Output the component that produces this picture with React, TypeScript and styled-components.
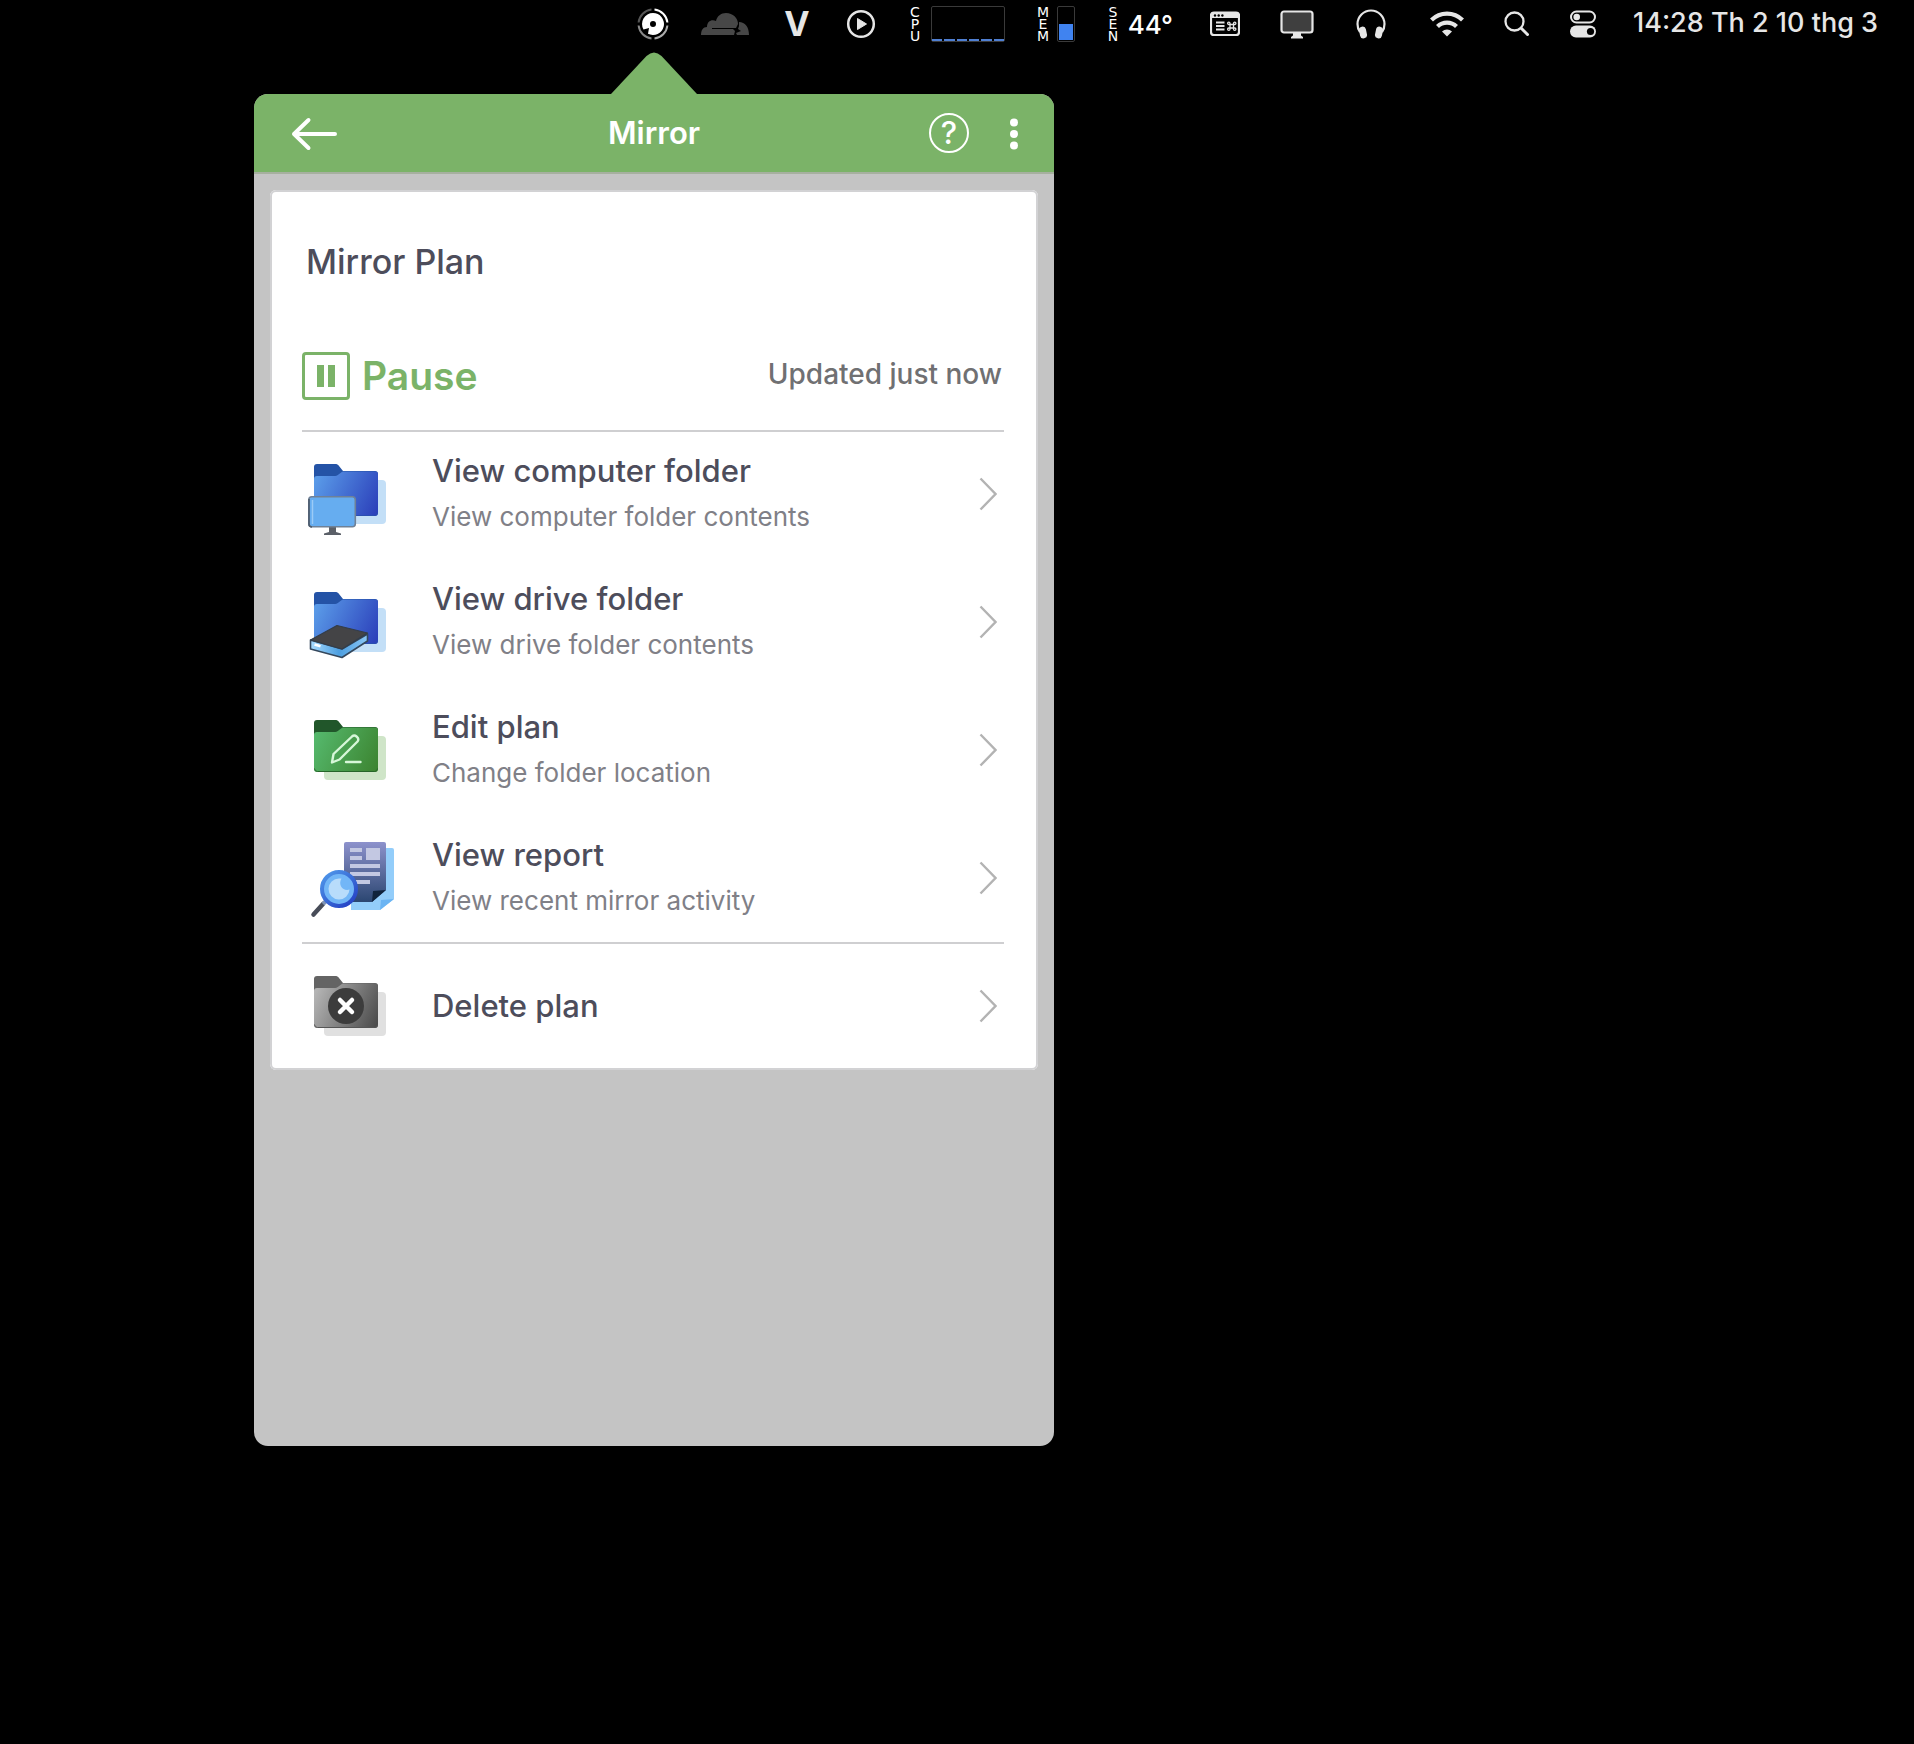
import React from "react";
import styled, { createGlobalStyle, css } from "styled-components";

const green = "#7bb368";
const ink = "#4d4d5b";
const chrome = "#e6e6e6";

const GlobalStyle = createGlobalStyle`
  *, *::before, *::after { box-sizing: border-box; }
  body {
    margin: 0;
    min-height: 100vh;
    background: #000;
    font-family: Inter, Roboto, "Liberation Sans", sans-serif;
  }
  button { font: inherit; color: inherit; background: none; border: 0; padding: 0; cursor: pointer; }
  h1, h2, p, ul { margin: 0; padding: 0; }
  ul { list-style: none; }
  svg { display: block; }
`;

/* ---------- menu bar ---------- */

const MenuBar = styled.nav`
  display: flex;
  align-items: center;
  justify-content: flex-end;
  gap: 32px;
  height: 48px;
  padding: 0 36px;
  color: ${chrome};
`;

const MenuItem = styled.button<{ $width?: number }>`
  display: flex;
  align-items: center;
  justify-content: center;
  flex: none;
  height: 48px;
  ${(p) => p.$width && css`width: ${p.$width}px;`}
`;

const Letter = styled.span`
  font-size: 34px;
  font-weight: 700;
  line-height: 48px;
`;

const Monitor = styled(MenuItem)`
  justify-content: space-between;
  color: #fff;
`;

const StackedLabel = styled.span`
  display: flex;
  flex-direction: column;
  align-items: center;
  width: 12px;
  font-family: "DejaVu Sans", sans-serif;
  font-size: 14px;
  line-height: 12px;
`;

const CpuGraph = styled.span`
  display: flex;
  align-items: flex-end;
  gap: 2px;
  width: 74px;
  height: 36px;
  border: 1px solid #3a3a3a;
  border-radius: 2px;
`;

const CpuBar = styled.span`
  flex: 1;
  height: 2px;
  background: #4f7fd2;
`;

const MemGauge = styled.span`
  display: flex;
  align-items: flex-end;
  width: 18px;
  height: 36px;
  padding: 1px;
  border: 1px solid #3a3a3a;
  border-radius: 2px;
`;

const MemFill = styled.span`
  flex: 1;
  height: 50%;
  background: #4083f0;
`;

const Temperature = styled.span`
  font-size: 26px;
  font-weight: 500;
`;

const Clock = styled.time`
  font-size: 27px;
  font-weight: 500;
  line-height: 46px;
  height: 48px;
  white-space: nowrap;
`;

/* ---------- popover ---------- */

const Panel = styled.main`
  position: relative;
  width: 800px;
  max-width: calc(100% - 254px);
  min-height: 1352px;
  margin: 46px 0 0 254px;
  border-radius: 14px;
  background: #c4c4c4;
`;

const Caret = styled.svg`
  position: absolute;
  bottom: 100%;
  left: 50%;
  margin-left: -43px;
`;

const PanelHeader = styled.header`
  display: grid;
  grid-template-columns: 1fr auto 1fr;
  align-items: center;
  height: 80px;
  padding: 0 26px;
  border-bottom: 2px solid #a6b09f;
  border-radius: 14px 14px 0 0;
  background: ${green};
  color: #fff;
`;

const PanelTitle = styled.h1`
  font-size: 31px;
  font-weight: 600;
  line-height: 40px;
`;

const BackButton = styled.button`
  justify-self: start;
`;

const HeaderActions = styled.div`
  display: flex;
  align-items: center;
  justify-content: flex-end;
  gap: 31px;
`;

const HelpButton = styled.button`
  width: 40px;
  height: 40px;
  border: 2px solid #fff;
  border-radius: 50%;
  font-size: 31px;
  font-weight: 500;
  line-height: 36px;
`;

const Card = styled.section`
  margin: 16px;
  padding: 50px 34px 0 32px;
  border-radius: 6px;
  background: #fff;
  box-shadow: inset 0 0 0 2px #d2d2d4;
`;

const PlanTitle = styled.h2`
  padding-left: 4px;
  color: ${ink};
  font-size: 34px;
  font-weight: 500;
  line-height: 44px;
`;

const StatusRow = styled.div`
  display: flex;
  align-items: center;
  justify-content: space-between;
  padding: 68px 2px 30px 0;
`;

const PauseButton = styled.button`
  display: flex;
  align-items: center;
  gap: 12px;
  height: 48px;
  color: ${green};
  font-size: 39px;
  font-weight: 600;
  line-height: 48px;
`;

const StatusText = styled.p`
  padding-bottom: 4px;
  color: #707072;
  font-size: 28px;
  font-weight: 500;
  line-height: 44px;
`;

const ActionItem = styled.li<{ $divided?: boolean }>`
  ${(p) => p.$divided && css`box-shadow: inset 0 2px 0 #cfcfd1;`}
`;

const ActionButton = styled.button`
  display: flex;
  align-items: center;
  width: 100%;
  height: 128px;
  padding-right: 7px;
  text-align: left;
`;

const ActionText = styled.span`
  display: flex;
  flex: 1;
  flex-direction: column;
  padding-left: 34px;
`;

const ActionTitle = styled.span`
  color: ${ink};
  font-size: 31px;
  font-weight: 500;
  line-height: 46px;
`;

const ActionHint = styled.span`
  color: #808087;
  font-size: 26px;
  line-height: 46px;
`;

/* ---------- drawings ---------- */

const DiskIcon = () => (
  <svg width="32" height="32" viewBox="0 0 32 32" fill="none" aria-hidden="true">
    <path d="M17.5 1.6A14.5 14.5 0 0 1 30.4 14.5" stroke="#fff" strokeWidth="2" />
    <path d="M30.4 17.5A14.5 14.5 0 0 1 17.5 30.4" stroke="#aaa" strokeWidth="2" />
    <path d="M14.5 30.4A14.5 14.5 0 0 1 1.6 17.5" stroke="#888" strokeWidth="2" />
    <path d="M1.6 14.5A14.5 14.5 0 0 1 14.5 1.6" stroke="#555" strokeWidth="2" />
    <path
      d="M16 5a11 11 0 1 1-5 20.8L12 20 6.5 21.5A11 11 0 0 1 16 5zM16 13a3 3 0 1 0 0 6 3 3 0 0 0 0-6z"
      fill="#fff"
      fillRule="evenodd"
    />
  </svg>
);

const CloudIcon = () => (
  <svg width="48" height="24" viewBox="0 0 48 24" fill="#474747" aria-hidden="true">
    <path d="M0 23c0-5 2-8 6-8 0-5 4-8 9-6 1-5 5-8 10-8 7 0 12 5 12 11l-2 4H11v1h21l2 2-1 4z" />
    <path d="M38 10c6 0 10 5 10 13H36l-1-2 5-2-3-2 1-3z" />
  </svg>
);

const PlayIcon = () => (
  <svg width="32" height="32" viewBox="0 0 32 32" aria-hidden="true">
    <circle cx="16" cy="16" r="12.8" fill="none" stroke={chrome} strokeWidth="2.5" />
    <path d="M12.5 10.5v11l9-5.500z" fill={chrome} stroke={chrome} strokeLinejoin="round" />
  </svg>
);

const ShortcutsIcon = () => (
  <svg width="30" height="26" viewBox="0 0 30 26" fill="none" stroke={chrome} aria-hidden="true">
    <rect x="1" y="1.5" width="28" height="22.5" rx="3" strokeWidth="2.2" />
    <path d="M1 4a3 3 0 0 1 3-3h22a3 3 0 0 1 3 3v3H1z" fill={chrome} stroke="none" />
    <g fill="#000" stroke="none">
      <circle cx="5" cy="4.5" r="1.2" />
      <circle cx="8.7" cy="4.5" r="1.2" />
      <circle cx="12.4" cy="4.5" r="1.2" />
    </g>
    <path d="M6 11.5h8.5M6 15h8.5M6 18.5h8.5" strokeWidth="1.8" />
    <path
      d="M20 13.500h3.500v3.500H20zM20 13.500h-1.300a1.200 1.200 0 1 1 1.300-1.300zM23.500 13.500v-1.300a1.200 1.200 0 1 1 1.300 1.300zM23.500 17h1.300a1.200 1.200 0 1 1-1.300 1.300zM20 17v1.300a1.200 1.200 0 1 1-1.300-1.300z"
      strokeWidth="1.3"
    />
  </svg>
);

const DisplayIcon = () => (
  <svg width="34" height="30" viewBox="0 0 34 30" aria-hidden="true">
    <rect x="1.5" y="2.5" width="31" height="21" rx="2.5" fill="#3f3f3f" stroke={chrome} strokeWidth="2.2" />
    <path d="M13 24h8v2.500l2 1.500v1.500H11V28l2-1.500z" fill={chrome} />
  </svg>
);

const HeadphonesIcon = () => (
  <svg width="30" height="30" viewBox="0 0 30 30" fill="none" aria-hidden="true">
    <path d="M4 23C2 20.500 1.500 18 1.500 15a13.500 13.500 0 0 1 27 0c0 3-.5 5.500-2.500 8" stroke={chrome} strokeWidth="2.2" />
    <rect x="3.5" y="17.5" width="7" height="12" rx="3.5" transform="rotate(-12 7 23.5)" fill={chrome} />
    <rect x="19.5" y="17.5" width="7" height="12" rx="3.5" transform="rotate(12 23 23.5)" fill={chrome} />
  </svg>
);

const WifiIcon = () => (
  <svg width="34" height="26" viewBox="0 0 34 26" fill="none" stroke={chrome} strokeWidth="4.2" aria-hidden="true">
    <path d="M1.500 9a22 22 0 0 1 31 0" />
    <path d="M7.500 15.500a13.500 13.500 0 0 1 19 0" />
    <path d="M17 25.500l-5-5a7.200 7.200 0 0 1 10 0z" fill={chrome} stroke="none" />
  </svg>
);

const SearchIcon = () => (
  <svg width="26" height="26" viewBox="0 0 26 26" fill="none" stroke={chrome} strokeLinecap="round" aria-hidden="true">
    <circle cx="10.5" cy="10.5" r="9" strokeWidth="2.3" />
    <path d="M17.5 17.5l6 6" strokeWidth="3" />
  </svg>
);

const ControlCenterIcon = () => (
  <svg width="26" height="28" viewBox="0 0 26 28" aria-hidden="true">
    <rect x="1" y="1.5" width="24" height="11" rx="5.5" fill="none" stroke={chrome} strokeWidth="2" />
    <circle cx="6.7" cy="7" r="3.3" fill={chrome} />
    <rect x="0" y="15.5" width="26" height="12" rx="6" fill={chrome} />
    <circle cx="20.5" cy="21.5" r="3.6" fill="#000" />
  </svg>
);

const BackIcon = () => (
  <svg width="60" height="40" viewBox="0 0 60 40" fill="none" stroke="#fff" strokeWidth="4" strokeLinecap="round" strokeLinejoin="round" aria-hidden="true">
    <path d="M55 21H14M28.500 7L14 21l14.500 14" />
  </svg>
);

const MoreIcon = () => (
  <svg width="28" height="40" viewBox="0 0 28 40" fill="#fff" aria-hidden="true">
    <circle cx="14" cy="9.5" r="4" />
    <circle cx="14" cy="21" r="4" />
    <circle cx="14" cy="32.5" r="4" />
  </svg>
);

const PauseIcon = () => (
  <svg width="48" height="48" viewBox="0 0 48 48" aria-hidden="true">
    <rect x="1.5" y="1.5" width="45" height="45" rx="2.5" fill="none" stroke={green} strokeWidth="3" />
    <path d="M15 13h7v22h-7zM26 13h7v22h-7z" fill={green} />
  </svg>
);

const ChevronIcon = () => (
  <svg width="18" height="34" viewBox="0 0 18 34" fill="none" stroke="#b3b3b3" strokeWidth="2.4" aria-hidden="true">
    <path d="M1.500 1.500L16.500 17L1.500 32.500" />
  </svg>
);

type FolderProps = {
  id: string;
  back: string;
  from: string;
  to: string;
  shade: string;
  rim: string;
  children?: React.ReactNode;
};

const FolderIcon = ({ id, back, from, to, shade, rim, children }: FolderProps) => (
  <svg width="96" height="88" viewBox="0 0 96 88" fill="none" aria-hidden="true">
    <defs>
      <linearGradient id={id} x1="12" y1="32" x2="76" y2="62" gradientUnits="userSpaceOnUse">
        <stop stopColor={from} />
        <stop offset="1" stopColor={to} />
      </linearGradient>
    </defs>
    <rect x="22" y="30" width="62" height="44" rx="4" fill={shade} />
    <path d="M12 17a3 3 0 0 1 3-3h18c2 0 3 .5 4 2l4 5h32a3 3 0 0 1 3 3v39H12z" fill={back} />
    <path d="M12 29a3 3 0 0 1 3-3h17c2 0 3-.4 4.500-1.500l3-2.200C40.500 21.500 41.500 21.500 43 21.500h30a3 3 0 0 1 3 3V63a3 3 0 0 1-3 3H15a3 3 0 0 1-3-3z" fill={`url(#${id})`} />
    <path d="M12.500 62.500a3 3 0 0 0 3 3h57a3 3 0 0 0 3-3" stroke={rim} strokeWidth="1" />
    {children}
  </svg>
);

const blueFolder = { back: "#2453a6", from: "#5a9be8", to: "#2b3fba", shade: "#c3dff7", rim: "#2a4fb0" };

const ComputerFolderIcon = () => (
  <FolderIcon id="folder-computer" {...blueFolder}>
    <path d="M27 77h7v5l5 1.500V85H22v-1.500l5-1.500z" fill="#5b6068" />
    <rect x="6.8" y="46.8" width="46.5" height="30" rx="3" fill="#66adf0" stroke="#6f8197" strokeWidth="1.6" />
    <path d="M7 49v25a3 3 0 0 0 3 3" stroke="#4c5a6b" strokeWidth="1.6" />
    <path d="M10.500 50v24" stroke="#9bcbf7" strokeWidth="1.5" />
  </FolderIcon>
);

const DriveFolderIcon = () => (
  <FolderIcon id="folder-drive" {...blueFolder}>
    <defs>
      <linearGradient id="drive-side" x1="8" y1="64" x2="66" y2="64" gradientUnits="userSpaceOnUse">
        <stop stopColor="#a9dcff" />
        <stop offset="0.5" stopColor="#4d9fe0" />
        <stop offset="1" stopColor="#8ac6f5" />
      </linearGradient>
    </defs>
    <path d="M8.500 62L40 71l25.500-15v7L40 79.500 8.500 71z" fill="url(#drive-side)" stroke="#34475c" strokeWidth="1.6" strokeLinejoin="round" />
    <path d="M8.500 62L35 47.500l30.500 7.500L40 71z" fill="#444446" stroke="#333d49" strokeWidth="1.2" strokeLinejoin="round" />
    <path d="M12.500 66.500l6 1.800" stroke="#fff" strokeWidth="2.5" />
  </FolderIcon>
);

const EditFolderIcon = () => (
  <FolderIcon id="folder-edit" back="#21562a" from="#55b86c" to="#3c8430" shade="#cfe5c8" rim="#27652a">
    <g stroke="#d7f7d9" strokeWidth="2.4" strokeLinejoin="round" strokeLinecap="round">
      <path d="M30 56.500l1.500-8.500L50 30.500c3-2.500 8 1.500 5.500 5L37.500 53.500z" />
      <path d="M44 56h14.500" />
    </g>
  </FolderIcon>
);

const DeleteFolderIcon = () => (
  <FolderIcon id="folder-delete" back="#646464" from="#b5b5b5" to="#4a4a4a" shade="#e0e0e0" rim="#555">
    <circle cx="44" cy="44" r="18" fill="#3c3c3c" />
    <path d="M38 38l12 12M50 38L38 50" stroke="#fff" strokeWidth="4.5" strokeLinecap="round" />
  </FolderIcon>
);

const ReportIcon = () => (
  <svg width="96" height="88" viewBox="0 0 96 88" fill="none" aria-hidden="true">
    <defs>
      <linearGradient id="report-page" x1="63" y1="8" x2="63" y2="68" gradientUnits="userSpaceOnUse">
        <stop stopColor="#8d92cc" />
        <stop offset="1" stopColor="#2b4671" />
      </linearGradient>
      <linearGradient id="report-lens" x1="24" y1="40" x2="50" y2="72" gradientUnits="userSpaceOnUse">
        <stop stopColor="#4d93e8" />
        <stop offset="1" stopColor="#2440c4" />
      </linearGradient>
    </defs>
    <path d="M49 14h41a2 2 0 0 1 2 2v49L78 76H49z" fill="#93cdfa" />
    <path d="M78 76l1-10 13-1z" fill="#6bb4f3" />
    <path d="M42 10a2 2 0 0 1 2-2h38a2 2 0 0 1 2 2v46L70 68H42z" fill="url(#report-page)" />
    <path d="M70 68l1-11 13-1z" fill="#10233c" />
    <path d="M48 14h12v4H48zM48 22h12v4H48zM64 14h14v12H64zM48 30h30v4H48zM48 38h30v4H48zM54 46h14v4H54z" fill="#c3c8e2" />
    <path d="M21 70L11.500 80.500" stroke="#484c58" strokeWidth="4.5" strokeLinecap="round" />
    <path d="M24 67l-3 3" stroke="#7f93b4" strokeWidth="4" />
    <circle cx="37" cy="55" r="17" fill="#72b6f7" stroke="url(#report-lens)" strokeWidth="4" />
    <path d="M37 44.500a10.500 10.500 0 1 0 10.500 11c-6 2-12-4-8-11z" fill="#b8dcfb" />
  </svg>
);

/* ---------- content ---------- */

const actions = [
  { title: "View computer folder", hint: "View computer folder contents", Icon: ComputerFolderIcon, divided: true },
  { title: "View drive folder", hint: "View drive folder contents", Icon: DriveFolderIcon },
  { title: "Edit plan", hint: "Change folder location", Icon: EditFolderIcon },
  { title: "View report", hint: "View recent mirror activity", Icon: ReportIcon },
  { title: "Delete plan", Icon: DeleteFolderIcon, divided: true },
];

const Stacked = ({ text }: { text: string }) => (
  <StackedLabel>
    {text.split("").map((letter, i) => (
      <span key={i}>{letter}</span>
    ))}
  </StackedLabel>
);

export default function App() {
  return (
    <>
      <GlobalStyle />
      <MenuBar aria-label="Menu bar">
        <MenuItem $width={32} aria-label="Mirror"><DiskIcon /></MenuItem>
        <MenuItem $width={48} aria-label="Cloud"><CloudIcon /></MenuItem>
        <MenuItem $width={32}><Letter>V</Letter></MenuItem>
        <MenuItem $width={32} aria-label="Play"><PlayIcon /></MenuItem>
        <Monitor $width={96}>
          <Stacked text="CPU" />
          <CpuGraph>
            {Array.from({ length: 6 }, (_, i) => <CpuBar key={i} />)}
          </CpuGraph>
        </Monitor>
        <Monitor $width={38}>
          <Stacked text="MEM" />
          <MemGauge><MemFill /></MemGauge>
        </Monitor>
        <Monitor $width={66}>
          <Stacked text="SEN" />
          <Temperature>44°</Temperature>
        </Monitor>
        <MenuItem $width={40} aria-label="Shortcuts"><ShortcutsIcon /></MenuItem>
        <MenuItem $width={40} aria-label="Display"><DisplayIcon /></MenuItem>
        <MenuItem $width={44} aria-label="Headphones"><HeadphonesIcon /></MenuItem>
        <MenuItem $width={44} aria-label="Wi-Fi"><WifiIcon /></MenuItem>
        <MenuItem $width={32} aria-label="Search"><SearchIcon /></MenuItem>
        <MenuItem $width={36} aria-label="Control Center"><ControlCenterIcon /></MenuItem>
        <Clock>14:28 Th 2 10 thg 3</Clock>
      </MenuBar>

      <Panel>
        <Caret width="86" height="42" viewBox="0 0 86 42" aria-hidden="true">
          <path d="M0 42L35.500 4Q43 -3 50.500 4L86 42z" fill={green} />
        </Caret>
        <PanelHeader>
          <BackButton aria-label="Back"><BackIcon /></BackButton>
          <PanelTitle>Mirror</PanelTitle>
          <HeaderActions>
            <HelpButton aria-label="Help">?</HelpButton>
            <button aria-label="More"><MoreIcon /></button>
          </HeaderActions>
        </PanelHeader>

        <Card>
          <PlanTitle>Mirror Plan</PlanTitle>
          <StatusRow>
            <PauseButton>
              <PauseIcon />
              Pause
            </PauseButton>
            <StatusText>Updated just now</StatusText>
          </StatusRow>
          <ul>
            {actions.map(({ title, hint, Icon, divided }) => (
              <ActionItem key={title} $divided={divided}>
                <ActionButton>
                  <Icon />
                  <ActionText>
                    <ActionTitle>{title}</ActionTitle>
                    {hint && <ActionHint>{hint}</ActionHint>}
                  </ActionText>
                  <ChevronIcon />
                </ActionButton>
              </ActionItem>
            ))}
          </ul>
        </Card>
      </Panel>
    </>
  );
}
